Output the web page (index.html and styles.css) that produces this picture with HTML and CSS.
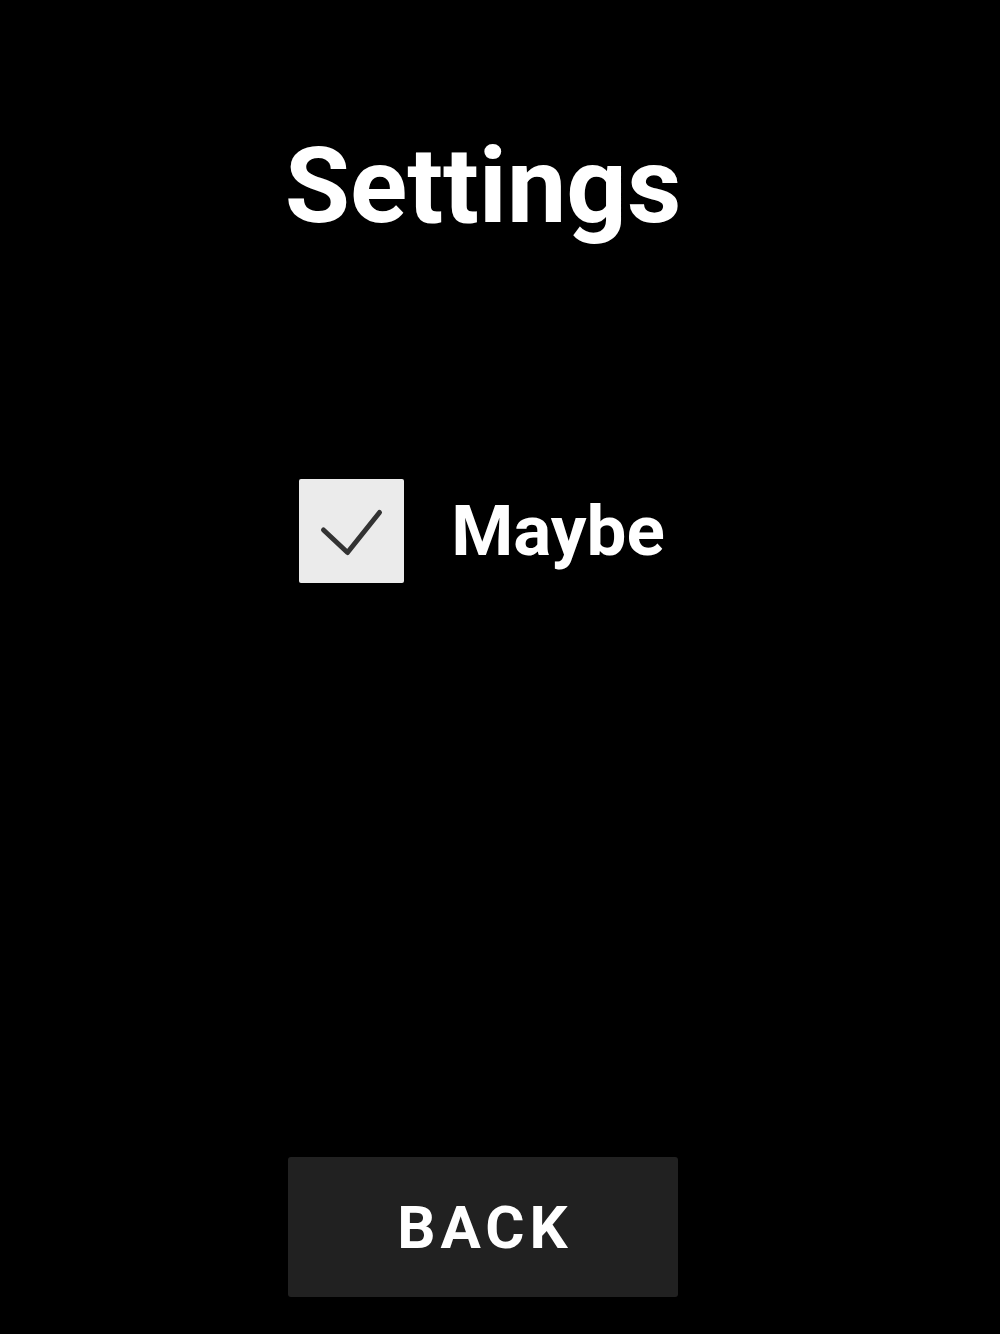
FILE: index.html
```html
<!DOCTYPE html>
<html>
<head>
<meta charset="utf-8">
<link rel="stylesheet" href="styles.css">
</head>
<body>
<main class="screen">
  <h1 class="title">Settings</h1>
  <label class="option">
    <span class="checkbox">
      <svg viewBox="0 0 105 104" width="105" height="104"><path d="M24.5 51 L48.5 73.5 L80.5 33.5" fill="none" stroke="#333333" stroke-width="5" stroke-linecap="round" stroke-linejoin="round"/></svg>
    </span>
    <span class="option-label">Maybe</span>
  </label>
  <button class="back">BACK</button>
</main>
</body>
</html>
```

FILE: styles.css
```css
html, body {
  margin: 0;
  padding: 0;
  background: #000000;
}
body {
  width: 1000px;
  height: 1334px;
  overflow: hidden;
  font-family: Roboto, "Liberation Sans", sans-serif;
  color: #ffffff;
}
.screen {
  width: 966px;
  display: flex;
  flex-direction: column;
  align-items: center;
}
.title {
  margin: 123px 0 0 0;
  height: 126px;
  font-size: 106px;
  font-weight: 700;
  line-height: 126px;
}
.option {
  margin-top: 230px;
  display: flex;
  align-items: center;
  gap: 47px;
  margin-left: -2px;
}
.checkbox {
  width: 105px;
  height: 104px;
  background: #ebebeb;
  border-radius: 2px;
  display: block;
}
.checkbox svg {
  display: block;
}
.option-label {
  font-size: 71px;
  font-weight: 700;
  line-height: 84px;
}
.back {
  margin-top: 574px;
  width: 390px;
  height: 140px;
  background: #212121;
  border: none;
  border-radius: 3px;
  color: #ffffff;
  font-family: Roboto, "Liberation Sans", sans-serif;
  font-size: 60px;
  font-weight: 700;
  letter-spacing: 5px;
  padding: 0 0 0 4px;
}
```
